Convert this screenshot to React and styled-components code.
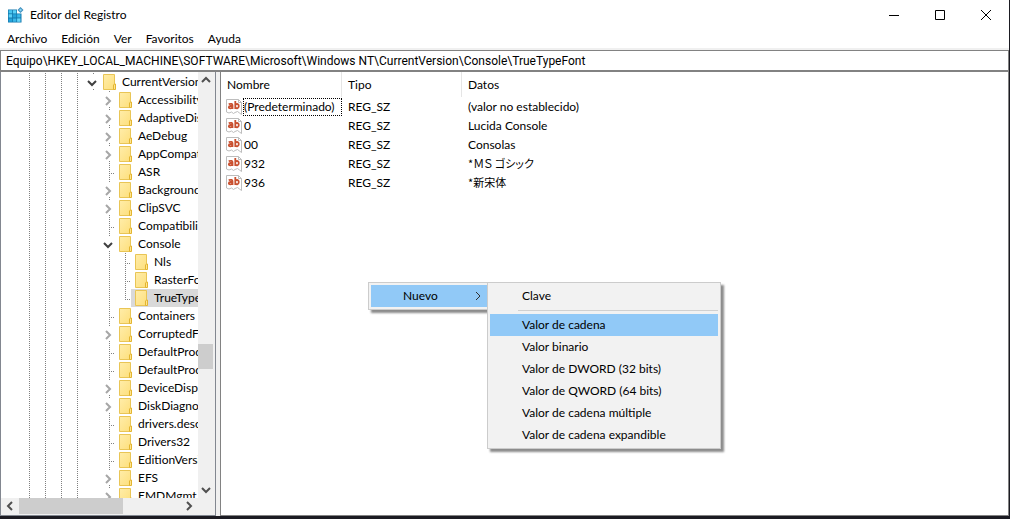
import React from "react";
import styled, { createGlobalStyle, css } from "styled-components";

const GlobalStyle = createGlobalStyle`
  *, *::before, *::after { box-sizing: border-box; }
  body {
    margin: 0;
    background: #1b1b22;
    color: #000;
    font: 12px/18px Lato, "Open Sans", sans-serif;
  }
  button, input { font: inherit; color: inherit; border: 0; padding: 0; margin: 0; background: none; }
  svg { display: block; flex: none; }
`;

const Window = styled.div`
  display: flex;
  flex-direction: column;
  height: 100vh;
  padding: 0 1px 3px 0;
`;

const TitleBar = styled.header`
  display: flex;
  align-items: center;
  flex: none;
  height: 30px;
  padding-left: 7px;
  background: #fff;
`;

const Title = styled.h1`
  flex: 1;
  margin: 0 0 0 6px;
  font-size: 12px;
  font-weight: 400;
`;

const WindowButton = styled.button`
  display: flex;
  align-items: center;
  justify-content: center;
  width: 46px;
  height: 28px;
`;

const MenuBar = styled.nav`
  display: flex;
  align-items: center;
  flex: none;
  gap: 14px;
  height: 20px;
  padding-left: 7px;
  background: #fff;
  border-bottom: 2px solid #f0f0f0;
`;

const MenuButton = styled.button`
  line-height: 18px;
`;

const AddressInput = styled.input`
  flex: none;
  width: 100%;
  height: 22px;
  padding: 0 5px;
  font-family: Roboto, sans-serif;
  background: #fff;
  border: solid #828282;
  border-width: 1px 1px 2px;
  outline: 0;
`;

const Panes = styled.main`
  display: flex;
  flex: 1;
  min-height: 0;
  background: #f0f0f0;
`;

const TreePane = styled.section`
  display: grid;
  grid-template-columns: 1fr 17px;
  grid-template-rows: 1fr 17px;
  flex: none;
  width: 216px;
  margin-right: 4px;
  border: solid #828790;
  border-width: 0 1px 1px;
`;

const Tree = styled.ul`
  margin: 0;
  padding: 1px 0 0;
  min-height: 0;
  overflow: hidden;
  list-style: none;
  background: #fff;
`;

const TreeRow = styled.li`
  display: flex;
  height: 18px;
  padding-left: 18px;
`;

const dots = "repeating-linear-gradient(to bottom, #808080 0 1px, transparent 1px 2px)";

const guides = {
  none: css``,
  line: css`
    background: ${dots} 10px 0 / 1px 18px no-repeat;
  `,
  branch: css`
    background:
      ${dots} 10px 0 / 1px 18px no-repeat,
      repeating-linear-gradient(to right, #808080 0 1px, transparent 1px 2px) 10px 10px / 7px 1px no-repeat;
  `,
  last: css`
    background:
      ${dots} 10px 0 / 1px 10px no-repeat,
      repeating-linear-gradient(to right, #808080 0 1px, transparent 1px 2px) 10px 10px / 7px 1px no-repeat;
  `,
  toggle: css`
    background:
      ${dots} 10px 0 / 1px 2px no-repeat,
      ${dots} 10px 16px / 1px 2px no-repeat;
  `,
};

const Guide = styled.span`
  display: flex;
  align-items: center;
  justify-content: center;
  flex: none;
  width: 16px;
  padding: 2px 1px 0 3px;
  ${(p) => guides[p.$kind]}
`;

const TreeLabel = styled.span`
  display: flex;
  align-items: center;
  flex: 1;
  gap: 6px;
  padding-left: 4px;
  white-space: nowrap;
  background: ${(p) => (p.$selected ? "#d9d9d9" : "none")};
`;

const VerticalScroll = styled.div`
  display: flex;
  flex-direction: column;
  align-items: center;
  padding-right: 2px;
  background: #f0f0f0;
`;

const HorizontalScroll = styled.div`
  display: flex;
  padding: 0 0 1px;
  background: #f0f0f0;
`;

const ScrollButton = styled.button`
  display: flex;
  align-items: center;
  justify-content: center;
  flex: none;
  width: 18px;
  height: 16px;
`;

const Track = styled.div`
  display: flex;
  flex: 1;
  flex-direction: ${(p) => (p.$vertical ? "column" : "row")};
  align-self: stretch;
`;

const TrackSpace = styled.div`
  flex: ${(p) => p.$grow};
`;

const Thumb = styled.div`
  flex: none;
  background: #cdcdcd;
  ${(p) => (p.$vertical ? "height: 25px;" : "width: 104px;")}
`;

const ListPane = styled.section`
  position: relative;
  flex: 1;
  background: #fff;
  border: solid #828282;
  border-width: 0 1px 1px;
`;

const ValueTable = styled.table`
  width: 100%;
  table-layout: fixed;
  border-spacing: 0;
`;

const HeadCell = styled.th`
  width: ${(p) => p.$width || "auto"};
  height: 25px;
  padding: 0 0 0 6px;
  border-right: ${(p) => (p.$width ? "1px solid #e5e5e5" : "0")};
  font-weight: 400;
  text-align: left;
`;

const Cell = styled.td`
  height: 19px;
  padding: 0 0 0 6px;
  white-space: nowrap;
`;

const NameCell = styled(Cell)`
  padding: 0 0 0 5px;
`;

const ValueName = styled.div`
  display: flex;
  align-items: center;
  gap: 1px;
`;

const ValueText = styled.span`
  flex: ${(p) => (p.$focused ? "1" : "none")};
  height: 18px;
  line-height: 16px;
  border: 1px ${(p) => (p.$focused ? "dotted #000" : "solid transparent")};
`;

const EastAsian = styled.span`
  font-family: "Noto Sans CJK JP", sans-serif;
  font-size: 11px;
  font-feature-settings: "palt";
`;

const Popup = styled.ul`
  position: absolute;
  top: ${(p) => p.$top}px;
  left: ${(p) => p.$left}px;
  width: ${(p) => p.$width}px;
  margin: 0;
  padding: 2px;
  list-style: none;
  background: #f2f2f2;
  border: 1px solid #ccc;
  box-shadow: 3px 3px 2px #8c8c8c;
`;

const PopupItem = styled.button`
  display: flex;
  align-items: center;
  justify-content: space-between;
  width: 100%;
  height: 22px;
  padding: 0 4px 0 32px;
  background: ${(p) => (p.$active ? "#91c9f7" : "none")};
`;

const PopupSeparator = styled.li`
  height: 7px;
  margin-left: 28px;
  background: linear-gradient(#d0d0d0, #d0d0d0) 0 3px / 100% 1px no-repeat;
`;

const arrowPaths = {
  up: "M1 7 5 3 9 7",
  down: "M1 3 5 7 9 3",
  left: "M7 1 3 5 7 9",
  right: "M3 1 7 5 3 9",
};

function Arrow({ to, color = "#505050", weight = 2, size = 10 }) {
  return (
    <svg width={size} height={size} viewBox="0 0 10 10" fill="none" stroke={color} strokeWidth={weight} aria-hidden="true">
      <path d={arrowPaths[to]} />
    </svg>
  );
}

function FolderIcon() {
  return (
    <svg width="13" height="16" viewBox="0 0 13 16" aria-hidden="true">
      <defs>
        <linearGradient id="folder" x1="0" y1="0" x2="1" y2="1">
          <stop offset="0" stopColor="#ffedaa" />
          <stop offset="1" stopColor="#fddf7c" />
        </linearGradient>
      </defs>
      <path d="M.5.5h11v15H.5z" fill="url(#folder)" stroke="#e9c555" />
      <path d="M10.500 15.500v-4.500l1-1h1v5.500z" fill="#ffe590" stroke="#e3b530" />
    </svg>
  );
}

function StringIcon() {
  return (
    <svg width="16" height="16" viewBox="0 0 16 16" aria-hidden="true">
      <path
        d="M.5.5H12.500L15.500 3.500V15.500L13.500 14 11.500 12.500 9 13.500 7.500 14.500 5.500 13 3 14 .5 13Z"
        fill="#fff"
        stroke="#bdbdbd"
      />
      <path d="M12.500.5V3.500H15.500" fill="none" stroke="#bdbdbd" />
      <g fill="none" stroke="#c9502f" strokeWidth="1.800">
        <path d="M2.700 5.200Q6.500 4 6.500 6.300V10M6.500 7H4.500Q2.700 7.200 2.800 8.300T4.400 9.300Q6 9.300 6.500 8" />
        <path d="M9.300 2V10M9.300 6.200Q9.900 4.800 11.200 4.900 12.800 5.200 12.800 7.100T11.200 9.300Q9.900 9.300 9.300 8.200" />
      </g>
    </svg>
  );
}

function RegistryIcon() {
  return (
    <svg width="17" height="16" viewBox="0 0 17 16" aria-hidden="true">
      <path d="M1 2.500h9v4h4.500V15.500H1z" fill="#1479ad" />
      <path d="M1.700 3.200h3.400v3.200H1.700z" fill="#45c4f0" />
      <path d="M5.900 3.200h3.400v3.200H5.900zM1.700 7.200h3.400v3.400H1.700z" fill="#5bd0f6" />
      <path d="M5.900 7.200h3.400v3.400H5.900zM1.700 11.400h3.400v3.400H1.700z" fill="#25a4dc" />
      <path d="M10.100 7.200h3.400v3.400h-3.400zM5.900 11.400h3.400v3.400H5.900z" fill="#3ab7e8" />
      <path d="M10.100 11.400h3.400v3.400h-3.400z" fill="#66d5f8" />
      <path d="M13.500 0 16.500 3 13.500 6 10.500 3z" fill="#3f8fbe" />
      <path d="M13.500 1.500 15 3 13.500 4.500 12 3z" fill="#8bd3f2" />
    </svg>
  );
}

const tree = [
  { name: "CurrentVersion", level: 1, state: "open" },
  { name: "Accessibility", level: 2, state: "closed" },
  { name: "AdaptiveDisplayBrightness", level: 2, state: "closed" },
  { name: "AeDebug", level: 2, state: "closed" },
  { name: "AppCompatFlags", level: 2, state: "closed" },
  { name: "ASR", level: 2 },
  { name: "BackgroundModel", level: 2, state: "closed" },
  { name: "ClipSVC", level: 2, state: "closed" },
  { name: "Compatibility32", level: 2 },
  { name: "Console", level: 2, state: "open" },
  { name: "Nls", level: 3 },
  { name: "RasterFonts", level: 3 },
  { name: "TrueTypeFont", level: 3, last: true, selected: true },
  { name: "Containers", level: 2 },
  { name: "CorruptedFileRecovery", level: 2, state: "closed" },
  { name: "DefaultProductKey", level: 2 },
  { name: "DefaultProductKey2", level: 2 },
  { name: "DeviceDisplayObjects", level: 2, state: "closed" },
  { name: "DiskDiagnostics", level: 2, state: "closed" },
  { name: "drivers.desc", level: 2 },
  { name: "Drivers32", level: 2 },
  { name: "EditionVersion", level: 2 },
  { name: "EFS", level: 2, state: "closed" },
  { name: "EMDMgmt", level: 2, state: "closed" },
];

const ancestors = {
  1: ["line", "line", "line", "line"],
  2: ["line", "line", "line", "line", "none"],
  3: ["line", "line", "line", "line", "none", "line"],
};

function TreeItem({ item }) {
  const own = item.state ? "toggle" : item.last ? "last" : "branch";
  return (
    <TreeRow>
      {ancestors[item.level].map((kind, i) => (
        <Guide key={i} $kind={kind} />
      ))}
      <Guide $kind={own}>
        {item.state === "open" && <Arrow to="down" color="#404040" />}
        {item.state === "closed" && <Arrow to="right" color="#a6a6a6" />}
      </Guide>
      <TreeLabel $selected={item.selected}>
        <FolderIcon />
        {item.name}
      </TreeLabel>
    </TreeRow>
  );
}

const values = [
  { name: "(Predeterminado)", data: "(valor no establecido)", focused: true },
  { name: "0", data: "Lucida Console" },
  { name: "00", data: "Consolas" },
  { name: "932", data: "*ＭＳ ゴシック", eastAsian: true },
  { name: "936", data: "*新宋体", eastAsian: true },
];

const newValueTypes = [
  "Valor de cadena",
  "Valor binario",
  "Valor de DWORD (32 bits)",
  "Valor de QWORD (64 bits)",
  "Valor de cadena múltiple",
  "Valor de cadena expandible",
];

export default function App() {
  return (
    <Window>
      <GlobalStyle />
      <TitleBar>
        <RegistryIcon />
        <Title>Editor del Registro</Title>
        <WindowButton aria-label="Minimizar">
          <svg width="10" height="10" viewBox="0 0 10 10">
            <path d="M0 5.500h10" stroke="#000" />
          </svg>
        </WindowButton>
        <WindowButton aria-label="Maximizar">
          <svg width="10" height="10" viewBox="0 0 10 10">
            <path d="M.5.5h9v9h-9z" fill="none" stroke="#000" />
          </svg>
        </WindowButton>
        <WindowButton aria-label="Cerrar">
          <svg width="10" height="10" viewBox="0 0 10 10">
            <path d="M0 0 10 10M10 0 0 10" stroke="#000" />
          </svg>
        </WindowButton>
      </TitleBar>
      <MenuBar>
        {["Archivo", "Edición", "Ver", "Favoritos", "Ayuda"].map((label) => (
          <MenuButton key={label}>{label}</MenuButton>
        ))}
      </MenuBar>
      <AddressInput
        aria-label="Ruta"
        defaultValue={"Equipo\\HKEY_LOCAL_MACHINE\\SOFTWARE\\Microsoft\\Windows NT\\CurrentVersion\\Console\\TrueTypeFont"}
      />
      <Panes>
        <TreePane>
          <Tree>
            {tree.map((item) => (
              <TreeItem key={item.name} item={item} />
            ))}
          </Tree>
          <VerticalScroll>
            <ScrollButton aria-label="Subir"><Arrow to="up" /></ScrollButton>
            <Track $vertical>
              <TrackSpace $grow={254} />
              <Thumb $vertical />
              <TrackSpace $grow={112} />
            </Track>
            <ScrollButton aria-label="Bajar"><Arrow to="down" /></ScrollButton>
          </VerticalScroll>
          <HorizontalScroll>
            <ScrollButton aria-label="Izquierda"><Arrow to="left" /></ScrollButton>
            <Track>
              <Thumb />
              <TrackSpace $grow={1} />
            </Track>
            <ScrollButton aria-label="Derecha"><Arrow to="right" /></ScrollButton>
          </HorizontalScroll>
        </TreePane>
        <ListPane>
          <ValueTable>
            <thead>
              <tr>
                <HeadCell $width="121px">Nombre</HeadCell>
                <HeadCell $width="120px">Tipo</HeadCell>
                <HeadCell>Datos</HeadCell>
              </tr>
            </thead>
            <tbody>
              {values.map((v) => (
                <tr key={v.name}>
                  <NameCell>
                    <ValueName>
                      <StringIcon />
                      <ValueText $focused={v.focused}>{v.name}</ValueText>
                    </ValueName>
                  </NameCell>
                  <Cell>REG_SZ</Cell>
                  <Cell>{v.eastAsian ? <EastAsian>{v.data}</EastAsian> : v.data}</Cell>
                </tr>
              ))}
            </tbody>
          </ValueTable>
          <Popup $top={210} $left={147} $width={122}>
            <li>
              <PopupItem $active>
                Nuevo
                <Arrow to="right" color="#303030" weight={1} />
              </PopupItem>
            </li>
          </Popup>
          <Popup $top={210} $left={266} $width={234}>
            <li><PopupItem>Clave</PopupItem></li>
            <PopupSeparator />
            {newValueTypes.map((label, i) => (
              <li key={label}>
                <PopupItem $active={i === 0}>{label}</PopupItem>
              </li>
            ))}
          </Popup>
        </ListPane>
      </Panes>
    </Window>
  );
}
